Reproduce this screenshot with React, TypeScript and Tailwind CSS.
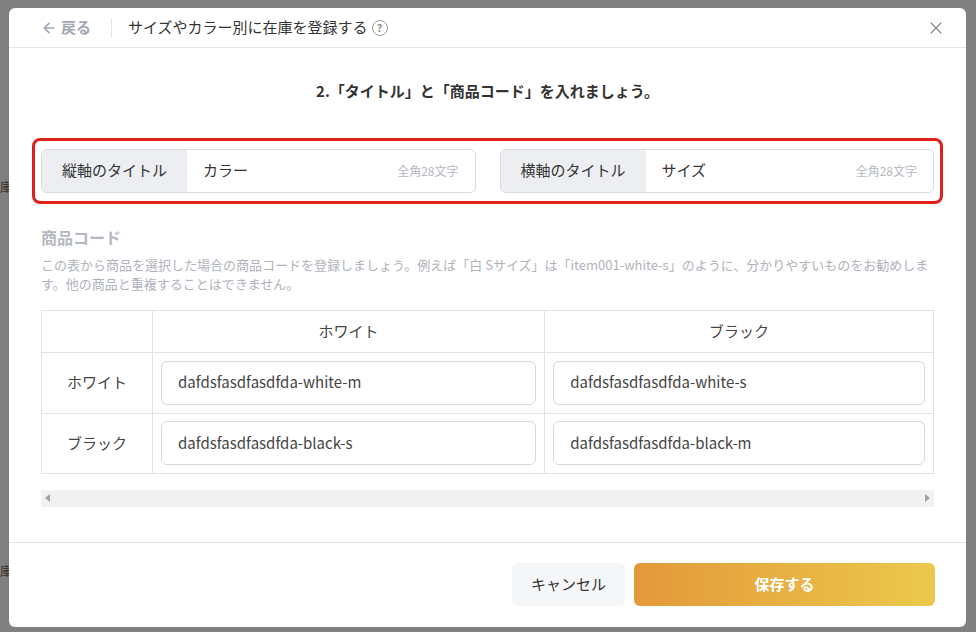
import React from 'react';
import { ArrowLeft, X } from 'lucide-react';

const font = { fontFamily: '"Noto Sans CJK JP", "Noto Sans", sans-serif' };

function TitleField({ label, value }: { label: string; value: string }) {
  return (
    <div className="flex-1 flex h-[44px] border border-[#d9dbe3] rounded-md overflow-hidden">
      <div className="w-[145px] bg-[#eceef2] flex items-center justify-center text-[15px] text-[#333]">{label}</div>
      <div className="flex-1 flex items-center justify-between px-4 text-[15px] text-[#333]">
        <span>{value}</span>
        <span className="text-[12px] text-[#b5b8c0]">全角28文字</span>
      </div>
    </div>
  );
}

function CodeInput({ value }: { value: string }) {
  return (
    <div className="h-[44px] border border-[#d5d7de] rounded-md flex items-center px-4 text-[15px] text-[#444]">{value}</div>
  );
}

export default function App() {
  return (
    <div className="w-[976px] h-[632px] bg-[#808080] pt-2 pl-[9px] overflow-hidden relative" style={font}>
      <span className="absolute left-0 top-[178px] text-[12px] text-[#3a2a2a]">庫</span>
      <span className="absolute left-0 top-[562px] text-[12px] text-[#3a2a2a]">庫</span>
      <div className="relative w-[957px] h-[619px] bg-white rounded-md flex flex-col">
        {/* Header */}
        <div className="h-10 flex items-center border-b border-[#e3e5ea] pl-8 pr-5">
          <div className="flex items-center gap-1 text-[15px] font-bold text-[#a3a7b2] pr-5 border-r border-[#e3e5ea] h-5">
            <ArrowLeft className="w-4 h-4" strokeWidth={2.5} />
            <span>戻る</span>
          </div>
          <div className="pl-4 text-[15px] text-[#333] flex items-center gap-1">
            サイズやカラー別に在庫を登録する
            <span className="w-4 h-4 rounded-full border-[1.5px] border-[#999] text-[10px] text-[#888] flex items-center justify-center font-bold">?</span>
          </div>
          <X className="ml-auto w-5 h-5 text-[#888]" strokeWidth={1.5} />
        </div>

        <div className="text-center text-[15px] font-semibold text-[#333] mt-[32px]">2.「タイトル」と「商品コード」を入れましょう。</div>

        <div className="mx-[23px] mt-[35px] border-[3px] border-[#e0201a] rounded-lg px-[6px] py-[8px] flex gap-6">
          <TitleField label="縦軸のタイトル" value="カラー" />
          <TitleField label="横軸のタイトル" value="サイズ" />
        </div>

        <div className="px-8">
          <div className="mt-[21px] text-[16px] font-bold text-[#b5b8c0]">商品コード</div>
          <p className="mt-[6px] text-[13px] leading-[19px] text-[#b0b3bb]">
            この表から商品を選択した場合の商品コードを登録しましょう。例えば「白 Sサイズ」は「item001-white-s」のように、分かりやすいものをお勧めします。他の商品と重複することはできません。
          </p>
          <table className="mt-[17px] w-full border-collapse text-[15px] text-[#444]">
            <tbody>
              <tr className="h-[42px]">
                <td className="w-[111px] border border-[#e0e2e8]"></td>
                <td className="border border-[#e0e2e8] text-center">ホワイト</td>
                <td className="border border-[#e0e2e8] text-center">ブラック</td>
              </tr>
              <tr className="h-[61px]">
                <td className="border border-[#e0e2e8] text-center">ホワイト</td>
                <td className="border border-[#e0e2e8] px-2"><CodeInput value="dafdsfasdfasdfda-white-m" /></td>
                <td className="border border-[#e0e2e8] px-2"><CodeInput value="dafdsfasdfasdfda-white-s" /></td>
              </tr>
              <tr className="h-[60px]">
                <td className="border border-[#e0e2e8] text-center">ブラック</td>
                <td className="border border-[#e0e2e8] px-2"><CodeInput value="dafdsfasdfasdfda-black-s" /></td>
                <td className="border border-[#e0e2e8] px-2"><CodeInput value="dafdsfasdfasdfda-black-m" /></td>
              </tr>
            </tbody>
          </table>
          <div className="mt-[16px] h-[17px] bg-[#f1f1f1] flex items-center justify-between px-1 text-[#a0a0a0]">
            <svg width="5" height="8" viewBox="0 0 5 8"><path d="M5 0 L0 4 L5 8 Z" fill="#a3a3a3" /></svg>
            <svg width="5" height="8" viewBox="0 0 5 8"><path d="M0 0 L5 4 L0 8 Z" fill="#a3a3a3" /></svg>
          </div>
        </div>

        <div className="mt-auto border-t border-[#e3e5ea] h-[85px] flex items-center justify-end gap-[9px] pr-[31px] pb-[1px]">
          <button className="w-[113px] h-[43px] rounded-md bg-[#f5f6f8] text-[15px] text-[#333]">キャンセル</button>
          <button className="w-[301px] h-[43px] rounded-md bg-gradient-to-r from-[#e3983a] to-[#ebc94b] text-[15px] font-bold text-white">保存する</button>
        </div>
      </div>
    </div>
  );
}
